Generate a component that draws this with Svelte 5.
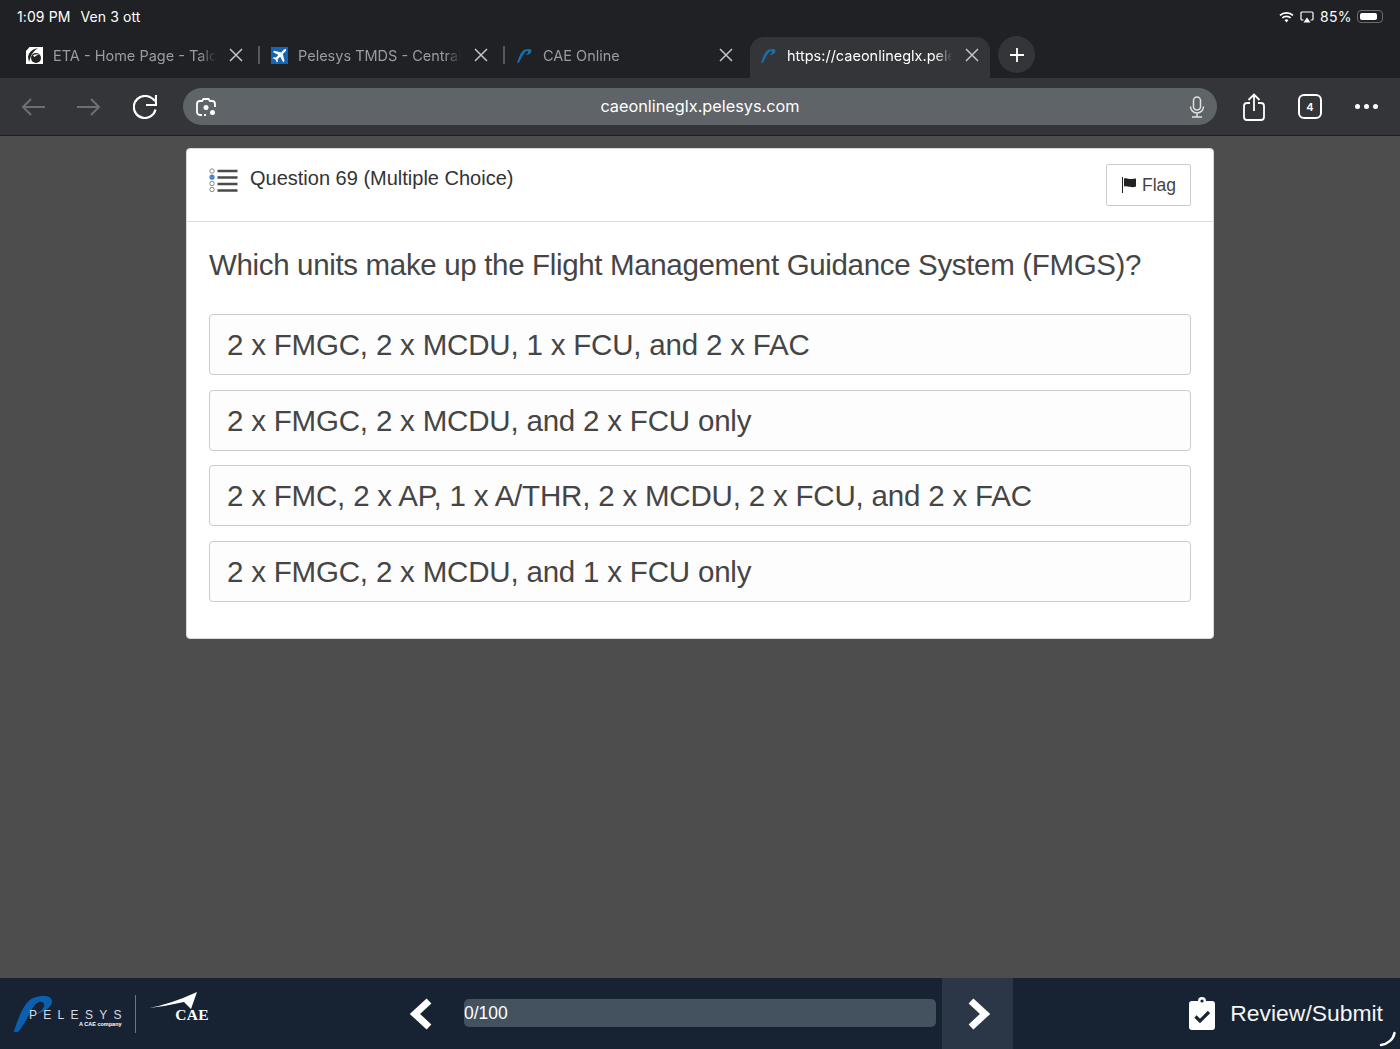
<script>
  const tabs = [
    { title: 'ETA - Home Page - Talon', icon: 'eta' },
    { title: 'Pelesys TMDS - Central', icon: 'plane' },
    { title: 'CAE Online', icon: 'pel' },
    { title: 'https://caeonlineglx.pelesys.com', icon: 'pel', active: true }
  ];

  const answers = [
    '2 x FMGC, 2 x MCDU, 1 x FCU, and 2 x FAC',
    '2 x FMGC, 2 x MCDU, and 2 x FCU only',
    '2 x FMC, 2 x AP, 1 x A/THR, 2 x MCDU, 2 x FCU, and 2 x FAC',
    '2 x FMGC, 2 x MCDU, and 1 x FCU only'
  ];
</script>

<div class="page">
  <!-- iPad status bar -->
  <header class="status">
    <div class="status-left"><span>1:09 PM</span><span>Ven 3 ott</span></div>
    <div class="status-right">
      <svg width="15" height="12" viewBox="0 0 15 12" fill="none" stroke="#fff" stroke-width="1.8">
        <path d="M1 4.4a9.4 9.4 0 0 1 13 0" />
        <path d="M3.4 6.9a6 6 0 0 1 8.2 0" />
        <path d="M7.5 11.4 5.6 9.3a2.7 2.7 0 0 1 3.8 0z" fill="#fff" stroke="none" />
      </svg>
      <svg width="14" height="12" viewBox="0 0 14 12" fill="none">
        <path d="M3.5 9H2a1 1 0 0 1-1-1V2a1 1 0 0 1 1-1h10a1 1 0 0 1 1 1v6a1 1 0 0 1-1 1h-1.500" stroke="#fff" stroke-width="1.200" />
        <path d="M7 6.500 10.500 11.500h-7z" fill="#fff" />
      </svg>
      <span class="percent">85%</span>
      <span class="battery"><span class="battery-level"></span></span>
    </div>
  </header>

  <!-- browser tabs -->
  <nav class="tabstrip">
    {#each tabs as tab, i}
      {#if i > 0 && !tab.active && !tabs[i - 1].active}<span class="tab-sep"></span>{/if}
      <div class="tab" class:active={tab.active}>
        {#if tab.icon === 'eta'}
          <svg class="favicon" width="17" height="17" viewBox="0 0 17 17">
            <rect width="17" height="17" fill="#fff" />
            <path d="M0 0h3.500L0 4z" fill="#222" />
            <circle cx="10" cy="11" r="5" fill="#222" />
            <path d="M2 10Q3 3 12 1 6 5 4.500 10.500L3 15z" fill="#222" />
            <path d="M7 8.500Q9.500 6.500 13 7.500 10 8 8.500 10z" fill="#fff" />
          </svg>
        {:else if tab.icon === 'plane'}
          <svg class="favicon" width="17" height="17" viewBox="0 0 17 17">
            <rect width="17" height="17" fill="#1464b8" />
            <path d="M14.600 1.600c.8.800.6 2-.2 2.800L11.800 7l1.700 7-1.300 1.300-3-5.600-2.600 2.500.3 2.300-1 1-1.400-2.900-2.900-1.400 1-1 2.300.3 2.500-2.600L1.900 5l1.300-1.300 7 1.700 2.600-2.600c.8-.8 2-1 2.800-.2z" fill="#fff" />
          </svg>
        {:else}
          <svg class="favicon" width="17" height="17" viewBox="0 0 17 17">
            <path d="M1 16C3 10 5 4 9 2.500 12 1.500 16 1.500 15.500 4.500 15 7 12 8 9.500 8 11.500 7 13 5 11.500 4 9 3.500 6 10 3 15.500z" fill="#1b6ea8" />
          </svg>
        {/if}
        <span class="tab-title">{tab.title}</span>
        <svg class="tab-close" width="14" height="14" viewBox="0 0 14 14" stroke="currentColor" stroke-width="1.500">
          <path d="M1 1l12 12M13 1 1 13" />
        </svg>
      </div>
    {/each}
    <button class="new-tab" aria-label="New tab">
      <svg width="16" height="16" viewBox="0 0 16 16" stroke="#fff" stroke-width="1.800"><path d="M8 1v14M1 8h14" /></svg>
    </button>
  </nav>

  <!-- browser toolbar -->
  <div class="toolbar">
    <div class="nav-buttons">
      <svg width="24" height="18" viewBox="0 0 24 18" fill="none" stroke="#6c7072" stroke-width="2"><path d="M24 9H2M10 1 2 9l8 8" /></svg>
      <svg width="24" height="18" viewBox="0 0 24 18" fill="none" stroke="#6c7072" stroke-width="2"><path d="M0 9h22M14 1l8 8-8 8" /></svg>
      <svg width="24" height="24" viewBox="0 0 24 24" fill="none" stroke="#fff" stroke-width="2.200">
        <path d="M22.500 14.500A11 11 0 1 1 12 1c4 0 7 1.500 10 5" />
        <path d="M23 0v10H13" />
      </svg>
    </div>
    <div class="urlbar">
      <svg class="lens" width="20" height="18" viewBox="0 0 20 18" fill="none" stroke="#fff" stroke-width="1.800">
        <path d="M6 17H4a3 3 0 0 1-3-3V6a3 3 0 0 1 3-3h2l1.500-2h5L14 3h2a3 3 0 0 1 3 3v3" />
        <path d="M10 17H8" />
        <circle cx="10" cy="9.500" r="2.500" fill="#fff" stroke="none" />
        <circle cx="16.500" cy="14.500" r="2.500" fill="#fff" stroke="none" />
      </svg>
      <span class="url">caeonlineglx.pelesys.com</span>
      <svg class="mic" width="16" height="22" viewBox="0 0 16 22" fill="none" stroke="#dfe1e2" stroke-width="1.500">
        <rect x="4.500" y="1" width="7" height="13" rx="3.500" />
        <path d="M1.500 10.500a6.500 6.500 0 0 0 13 0M8 17v4M3 21h10" />
      </svg>
    </div>
    <div class="tool-buttons">
      <svg width="22" height="28" viewBox="0 0 22 28" fill="none" stroke="#fff" stroke-width="1.800">
        <path d="M7 10H4a3 3 0 0 0-3 3v11a3 3 0 0 0 3 3h14a3 3 0 0 0 3-3V13a3 3 0 0 0-3-3h-3M11 18V1.500M5.500 7 11 1.500 16.500 7" />
      </svg>
      <span class="tab-count">4</span>
      <span class="more"><i></i><i></i><i></i></span>
    </div>
  </div>

  <main class="content">
    <section class="card">
      <div class="card-head">
        <div class="card-title">
          <svg width="30" height="26" viewBox="0 0 30 26">
            <g fill="none" stroke="#8a8a8a" stroke-width="1">
              <circle cx="3" cy="3" r="2.200" />
              <circle cx="3" cy="15.500" r="2.200" />
              <circle cx="3" cy="21.500" r="2.200" />
            </g>
            <circle cx="3" cy="9.200" r="2.600" fill="#4a86d8" />
            <path d="M8.500 3h20M8.500 9.500h20M8.500 16h20M8.500 22.500h20" stroke="#4a4a4a" stroke-width="2.400" />
          </svg>
          <h2>Question 69 (Multiple Choice)</h2>
        </div>
        <button class="flag">
          <svg width="16" height="16" viewBox="0 0 16 16">
            <path d="M1 0h1v16H1z" fill="#222" />
            <path d="M3 1.500c3-1 5 1 8 .5 2-.2 3.500-.5 4-.5v8c-2 1-4 1-6.500.3C6 9 4.500 9 3 9.500z" fill="#222" />
          </svg>
          Flag
        </button>
      </div>
      <div class="card-body">
        <p class="question">Which units make up the Flight Management Guidance System (FMGS)?</p>
        <ul class="answers">
          {#each answers as answer}
            <li>{answer}</li>
          {/each}
        </ul>
      </div>
    </section>
  </main>

  <footer class="footer">
    <div class="logos">
      <div class="pelesys">
        <svg class="swoosh" width="40" height="36" viewBox="0 0 40 36">
          <path d="M0 35C4 24 8 10 17 3c5-3 20-6 21 2 .5 6-9 12-17 13 7-3 10-7 9-10-2-4-7-2-10 2-4 6-8 16-15 25-2 2-5 2-5 0z" fill="#0b5fb0" />
        </svg>
        <span class="pelesys-name">PELESYS</span>
        <span class="pelesys-sub">A CAE company</span>
      </div>
      <span class="logo-sep"></span>
      <div class="cae">
        <svg width="49" height="17" viewBox="0 0 49 17"><path d="M0 16Q22 12 48 0l-6 17-7-7Q18 14 0 16z" fill="#fff" /></svg>
        <span>CAE</span>
      </div>
    </div>

    <button class="step prev" aria-label="Previous">
      <svg width="24" height="32" viewBox="0 0 24 32" fill="none" stroke="#fff" stroke-width="7"><path d="M19 3 5 16l14 13" /></svg>
    </button>
    <div class="progress">0/100</div>
    <button class="step next" aria-label="Next">
      <svg width="24" height="32" viewBox="0 0 24 32" fill="none" stroke="#fff" stroke-width="7"><path d="M5 3l14 13L5 29" /></svg>
    </button>

    <div class="review">
      <svg width="26" height="34" viewBox="0 0 26 34">
        <path d="M3 5h6a4 4 0 0 1 8 0h6a3 3 0 0 1 3 3v23a3 3 0 0 1-3 3H3a3 3 0 0 1-3-3V8a3 3 0 0 1 3-3z" fill="#fff" />
        <circle cx="13" cy="5" r="1.600" fill="#172333" />
        <path d="M6.500 20.500l4.500 4.500 9-9" fill="none" stroke="#172333" stroke-width="3.200" />
      </svg>
      <span>Review/Submit</span>
    </div>
    <svg class="home-corner" width="18" height="16" viewBox="0 0 18 16" fill="none" stroke="#fff" stroke-width="2.500" stroke-linecap="round">
      <path d="M15.500 2C14.500 8 9 13 2 14" />
    </svg>
  </footer>
</div>

<style>
  :global(body) {
    margin: 0;
    background: #4d4d4d;
  }

  .page {
    display: flex;
    flex-direction: column;
    height: 1049px;
    overflow: hidden;
    font-family: Inter, "Liberation Sans", sans-serif;
  }

  /* Status bar */
  .status {
    display: flex;
    justify-content: space-between;
    align-items: center;
    height: 33px;
    padding: 0 16px 0 17px;
    background: #1f2125;
    color: #fff;
    font-size: 14px;
  }

  .status-left {
    display: flex;
    gap: 10px;
    letter-spacing: 0.1px;
  }

  .status-right {
    display: flex;
    align-items: center;
    gap: 6px;
    padding-right: 1px;
  }

  .percent {
    letter-spacing: 0.4px;
  }

  .battery {
    display: block;
    box-sizing: border-box;
    width: 26px;
    height: 13px;
    margin-left: -1px;
    padding: 2px;
    border: 1px solid #6a6c70;
    border-radius: 4px;
  }

  .battery-level {
    display: block;
    width: 85%;
    height: 100%;
    border-radius: 2px;
    background: #fff;
  }

  /* Tabs */
  .tabstrip {
    display: flex;
    align-items: flex-end;
    height: 45px;
    padding-left: 15px;
    background: #1f2125;
  }

  .tab {
    display: flex;
    align-items: center;
    box-sizing: border-box;
    width: 242px;
    height: 41px;
    padding: 0 14px 5px 11px;
    color: #9a9c9f;
    font-size: 14.500px;
  }

  .tab.active {
    width: 240px;
    margin-left: 3px;
    padding-left: 10px;
    padding-right: 11px;
    border-radius: 14px 14px 0 0;
    background: #333538;
    color: #fff;
  }

  .tab-sep {
    width: 2px;
    height: 18px;
    margin: 0 0 14px 1px;
    background: #55585c;
  }

  .favicon {
    flex: none;
    margin-right: 10px;
  }

  .tab-title {
    flex: 1;
    overflow: hidden;
    white-space: nowrap;
    -webkit-mask-image: linear-gradient(to right, #000 90%, transparent);
    mask-image: linear-gradient(to right, #000 90%, transparent);
  }

  .tab-close {
    flex: none;
    margin-left: 13px;
    color: #c3c5c7;
  }

  .new-tab {
    display: flex;
    align-items: center;
    justify-content: center;
    width: 37px;
    height: 37px;
    margin: 0 0 5px 8px;
    padding: 0;
    border: 0;
    border-radius: 50%;
    background: #333538;
  }

  /* Toolbar */
  .toolbar {
    display: flex;
    align-items: center;
    box-sizing: border-box;
    height: 58px;
    padding: 0 21px;
    border-bottom: 1px solid #1f2023;
    background: #333538;
  }

  .nav-buttons {
    display: flex;
    align-items: center;
    gap: 32px;
    width: 162px;
  }

  .urlbar {
    display: flex;
    align-items: center;
    justify-content: space-between;
    position: relative;
    box-sizing: border-box;
    width: 1034px;
    height: 37px;
    padding: 0 12px 0 13px;
    border-radius: 19px;
    background: #5f6468;
    color: #fff;
    font-size: 16.300px;
  }

  .url {
    position: absolute;
    left: 0;
    right: 0;
    margin-top: -2px;
    text-align: center;
  }

  .tool-buttons {
    display: flex;
    align-items: center;
    gap: 33px;
    margin-left: 26px;
  }

  .tab-count {
    display: flex;
    align-items: center;
    justify-content: center;
    box-sizing: border-box;
    width: 24px;
    height: 25px;
    border: 2px solid #fff;
    border-radius: 6px;
    color: #fff;
    font-size: 11px;
    font-weight: 600;
  }

  .more {
    display: flex;
    gap: 4px;
  }

  .more i {
    display: block;
    width: 5px;
    height: 5px;
    border-radius: 50%;
    background: #fff;
  }

  /* Question card */
  .content {
    flex: 1;
    display: flex;
    justify-content: center;
    align-items: flex-start;
    padding-top: 12px;
    background: #4d4d4d;
    font-family: "Liberation Sans", Arial, sans-serif;
    color: #333;
  }

  .card {
    box-sizing: border-box;
    width: 1028px;
    height: 491px;
    border: 1px solid #d8d8d8;
    border-radius: 4px;
    background: #fff;
  }

  .card-head {
    display: flex;
    justify-content: space-between;
    box-sizing: border-box;
    height: 73px;
    padding: 15px 22px 0;
    border-bottom: 1px solid #dcdcdc;
  }

  .card-title {
    display: flex;
    align-items: flex-start;
    gap: 11px;
    padding-top: 3px;
  }

  .card-title svg {
    margin-top: 1px;
  }

  .card-title h2 {
    margin: 0;
    font-size: 20px;
    font-weight: 400;
    line-height: 23px;
    color: #333;
  }

  .flag {
    display: flex;
    align-items: center;
    justify-content: center;
    gap: 5px;
    box-sizing: border-box;
    width: 85px;
    height: 42px;
    padding: 0;
    border: 1px solid #ccc;
    border-radius: 2px;
    background: #fff;
    color: #444;
    font-family: inherit;
    font-size: 17.500px;
  }

  .card-body {
    padding: 26px 22px 0;
  }

  .question {
    margin: 0 0 32px;
    font-size: 29.500px;
    letter-spacing: -0.34px;
    line-height: 34px;
    font-weight: 400;
    color: #454545;
    white-space: nowrap;
  }

  .answers {
    display: flex;
    flex-direction: column;
    gap: 14.600px;
    margin: 0;
    padding: 0;
    list-style: none;
  }

  .answers li {
    box-sizing: border-box;
    height: 61px;
    padding: 0 17px;
    border: 1px solid #ccc;
    border-radius: 4px;
    background: #fdfdfd;
    font-size: 29.500px;
    letter-spacing: -0.19px;
    line-height: 59px;
    color: #454545;
    white-space: nowrap;
  }

  /* Footer */
  .footer {
    display: flex;
    align-items: center;
    position: relative;
    height: 71px;
    background: #172333;
    color: #fff;
    font-family: "Liberation Sans", Arial, sans-serif;
  }

  .logos {
    display: flex;
    align-items: center;
    width: 400px;
    padding-left: 14px;
    box-sizing: border-box;
  }

  .pelesys {
    position: relative;
    width: 108px;
    height: 36px;
  }

  .swoosh {
    position: absolute;
    left: 0;
    top: 0;
  }

  .pelesys-name {
    position: absolute;
    left: 15px;
    top: 12px;
    font-size: 12px;
    letter-spacing: 6.300px;
    color: #d8dce0;
  }

  .pelesys-sub {
    position: absolute;
    left: 65px;
    top: 25px;
    font-size: 5.500px;
    font-weight: 700;
    white-space: nowrap;
  }

  .logo-sep {
    width: 1px;
    height: 38px;
    margin: 0 13px;
    background: #6d7682;
  }

  .cae {
    display: flex;
    flex-direction: column;
    align-items: flex-start;
    width: 60px;
    margin-top: -12px;
  }

  .cae span {
    align-self: flex-end;
    margin-top: -3px;
    font-family: "Liberation Serif", serif;
    font-size: 15.500px;
    font-weight: 700;
    line-height: 17px;
    letter-spacing: 0.300px;
  }

  .step {
    display: flex;
    align-items: center;
    justify-content: center;
    padding: 0;
    border: 0;
    background: none;
  }

  .prev {
    width: 43px;
    height: 71px;
  }

  .next {
    width: 71px;
    height: 71px;
    margin-left: 6px;
    background: #2b3747;
  }

  .progress {
    box-sizing: border-box;
    width: 472px;
    height: 28px;
    margin: -1px 0 0 21px;
    border-radius: 5px;
    background: #445260;
    font-size: 17.500px;
    line-height: 28px;
  }

  .review {
    display: flex;
    align-items: center;
    gap: 15px;
    margin-left: auto;
    margin-top: -1px;
    padding-right: 17px;
    font-size: 22.900px;
    color: #f4f5f6;
  }

  .home-corner {
    position: absolute;
    right: 3px;
    bottom: 2px;
  }
</style>
